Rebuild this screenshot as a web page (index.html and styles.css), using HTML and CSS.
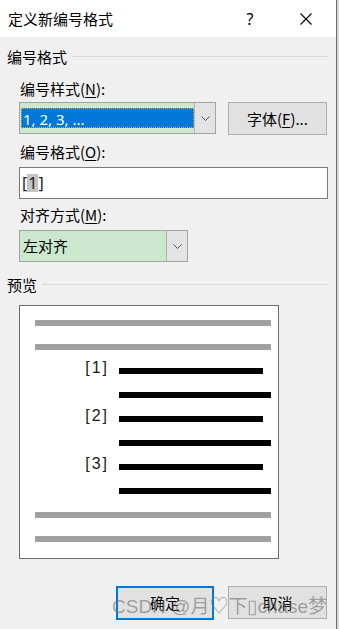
FILE: index.html
```html
<!DOCTYPE html>
<html lang="zh-CN">
<head>
<meta charset="utf-8">
<title>定义新编号格式</title>
<link rel="stylesheet" href="styles.css">
</head>
<body>
<div class="dialog">
  <div class="titlebar">
    <span class="title">定义新编号格式</span>
    <span class="help">?</span>
    <svg class="close" width="12" height="12" viewBox="0 0 12 12"><path d="M0.5 0.5 L11.5 11.5 M11.5 0.5 L0.5 11.5" stroke="#000" stroke-width="1.1" fill="none"/></svg>
  </div>

  <div class="group-head g1"><span>编号格式</span><i class="rule"></i></div>

  <div class="label l1">编号样式(<u>N</u>):</div>
  <div class="row r1">
    <div class="combo wide">
      <div class="combo-field"><span class="sel">1, 2, 3, ...</span></div>
      <div class="drop"><svg width="9" height="5" viewBox="0 0 9 5"><polyline points="0.5,0.5 4.5,4.5 8.5,0.5" stroke="#555" fill="none"/></svg></div>
    </div>
    <div class="btn font-btn">字体(<u>F</u>)...</div>
  </div>

  <div class="label l2">编号格式(<u>O</u>):</div>
  <div class="input">[<span class="field">1</span>]</div>

  <div class="label l3">对齐方式(<u>M</u>):</div>
  <div class="combo narrow">
    <div class="combo-field plain">左对齐</div>
    <div class="drop"><svg width="9" height="5" viewBox="0 0 9 5"><polyline points="0.5,0.5 4.5,4.5 8.5,0.5" stroke="#555" fill="none"/></svg></div>
  </div>

  <div class="group-head g2"><span>预览</span><i class="rule"></i></div>

  <div class="preview">
    <div class="bar gray"></div>
    <div class="bar gray"></div>
    <div class="num-row"><span class="num">[1]</span><span class="bar black short"></span></div>
    <div class="num-row"><span class="num"></span><span class="bar black long"></span></div>
    <div class="num-row"><span class="num">[2]</span><span class="bar black short"></span></div>
    <div class="num-row"><span class="num"></span><span class="bar black long"></span></div>
    <div class="num-row"><span class="num">[3]</span><span class="bar black short"></span></div>
    <div class="num-row"><span class="num"></span><span class="bar black long"></span></div>
    <div class="bar gray"></div>
    <div class="bar gray"></div>
  </div>

  <div class="buttons">
    <div class="btn ok">确定</div>
    <div class="btn cancel">取消</div>
  </div>

  <div class="watermark">CSDN @月♡下▯chase梦</div>
</div>
<div class="edge"></div>
<div class="outside"></div>
</body>
</html>
```

FILE: styles.css
```css
html, body {
  margin: 0;
  padding: 0;
}
body {
  width: 339px;
  height: 629px;
  overflow: hidden;
  display: flex;
  font-family: "Noto Sans CJK SC", "Noto Sans", sans-serif;
  font-size: 15px;
  color: #000;
  background: #f0f0f0;
}
u { text-decoration: underline; text-underline-offset: 2px; }

.dialog {
  position: relative;
  width: 336px;
  height: 629px;
  background: #f0f0f0;
  display: flex;
  flex-direction: column;
}
.edge { width: 1px; background: #6b6b6b; }
.outside { width: 2px; background: #d8d8d8; }

.titlebar {
  height: 37px;
  flex: none;
  background: #fff;
  display: flex;
  align-items: center;
}
.title { flex: 1; margin-left: 8px; line-height: 20px; }
.help {
  width: 14px;
  text-align: center;
  margin-right: 43px;
  font-family: "Noto Sans", sans-serif;
  font-size: 16px;
  line-height: 20px;
}
.close { margin-right: 24px; display: block; }

.group-head {
  display: flex;
  align-items: center;
  padding-left: 7px;
  padding-right: 8px;
  height: 20px;
  line-height: 20px;
  gap: 5px;
}
.group-head .rule {
  flex: 1;
  height: 1px;
  background: #d9d9d9;
  margin-top: -2px;
}
.g1 { margin-top: 10px; }
.g2 { margin-top: 13px; }

.label {
  padding-left: 20px;
  height: 20px;
  line-height: 20px;
}
.l1 { margin-top: 12px; }
.l2 { margin-top: 7px; }
.l3 { margin-top: 6px; }

.row {
  display: flex;
  gap: 12px;
  padding-left: 19px;
  margin-top: 3px;
}

.combo {
  display: flex;
  height: 32px;
  box-sizing: border-box;
  border: 1px solid #a3a3a3;
  background: #cbe8cf;
}
.combo.wide { width: 197px; }
.combo.narrow { width: 169px; margin-left: 19px; margin-top: 5px; }
.combo-field {
  flex: 1;
  padding: 5px 0 5px 1px;
  display: flex;
}
.combo-field.plain {
  padding: 0 0 0 3px;
  align-items: center;
  line-height: 20px;
}
.sel {
  flex: 1;
  background: #0078d7;
  color: #fff;
  height: 20px;
  line-height: 20px;
  box-sizing: border-box;
  border: 1px dotted #d9a441;
  padding-left: 1px;
  font-family: "Noto Sans", sans-serif;
  font-size: 15px;
}
.drop {
  width: 21px;
  box-sizing: border-box;
  border-left: 1px solid #b5b5b5;
  background: #e3e3e3;
  display: flex;
  align-items: center;
  justify-content: center;
}

.btn {
  box-sizing: border-box;
  background: #e1e1e1;
  border: 1px solid #adadad;
  display: flex;
  align-items: center;
  justify-content: center;
  line-height: 20px;
}
.font-btn { width: 99px; height: 33px; }

.input {
  margin: 5px 8px 0 19px;
  height: 32px;
  box-sizing: border-box;
  border: 1px solid #7a7a7a;
  background: #fff;
  padding-left: 2px;
  display: flex;
  align-items: center;
  font-family: "Noto Sans", sans-serif;
  font-size: 16px;
  color: #222;
}
.field {
  background: #c4c4c4;
  padding: 0 1px;
  line-height: 18px;
}

.preview {
  margin: 10px 0 0 19px;
  width: 260px;
  height: 254px;
  box-sizing: border-box;
  border: 1px solid #6a6a6a;
  background: #fff;
  padding: 14px 7px 0 15px;
  display: flex;
  flex-direction: column;
  gap: 18px;
}
.bar { height: 6px; display: block; flex: none; }
.bar.gray { background: #a0a0a0; }
.bar.black { background: #000; }
.bar.short { width: 144px; }
.bar.long { width: 152px; }
.num-row {
  display: flex;
  height: 6px;
  align-items: center;
  gap: 12px;
}
.num {
  width: 74px;
  flex: none;
  text-align: right;
  font-family: "Liberation Sans", sans-serif;
  font-size: 16px;
  letter-spacing: 2px;
  margin-right: -2px;
  line-height: 16px;
  margin-top: -6px;
  color: #1a1a1a;
}

.buttons {
  display: flex;
  justify-content: flex-end;
  gap: 14px;
  padding-right: 9px;
  margin-top: 27px;
}
.ok { width: 98px; height: 34px; border: 2px solid #0078d7; }
.cancel { width: 99px; height: 33px; }

.watermark {
  position: absolute;
  left: 112px;
  top: 595px;
  font-family: "Liberation Sans", "Noto Sans CJK SC", sans-serif;
  font-size: 19px;
  line-height: 24px;
  color: rgba(110, 110, 110, 0.6);
  white-space: nowrap;
  pointer-events: none;
}
```
